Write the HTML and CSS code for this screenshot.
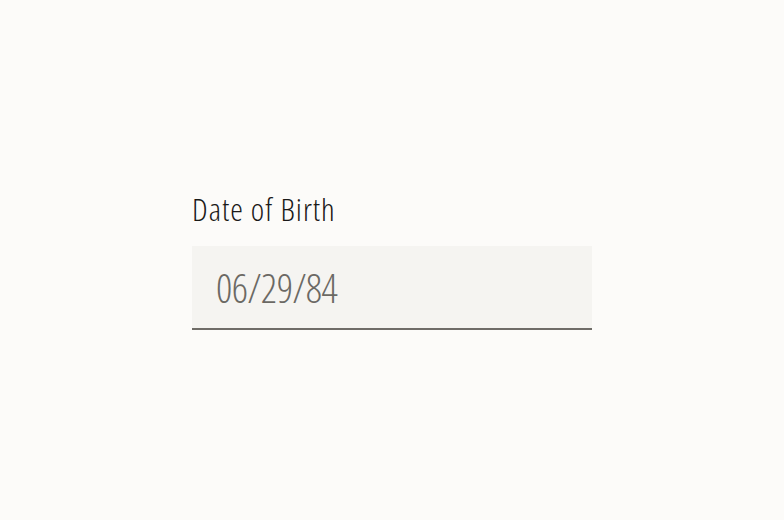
FILE: index.html
```html
<!DOCTYPE html>
<html lang="en">
<head>
    <meta charset="UTF-8">
    <meta name="viewport" content="width=device-width, initial-scale=1.0">
    <title>Date of Birth</title>
    <link rel="stylesheet" href="styles.css">
</head>
<body>

    <main class="page">
        <div class="field">
            <label class="field-label" for="dob">Date of Birth</label>
            <input class="field-input" id="dob" type="text" value="06/29/84">
        </div>
    </main>

</body>
</html>
```
FILE: styles.css
```css
body {
    font-family: "Open Sans", "Roboto Condensed", sans-serif;
    font-stretch: 75%;
    background-color: #fcfbf9;
    margin: 0;
    padding: 0;
}

.page {
    display: flex;
    justify-content: center;
    padding-top: 193px;
}

.field {
    display: flex;
    flex-direction: column;
    width: 400px;
}

.field-label {
    font-size: 32px;
    font-weight: 350;
    line-height: 32px;
    letter-spacing: 1px;
    color: #1a1918;
    margin-bottom: 21px;
}

.field-input {
    box-sizing: border-box;
    width: 400px;
    height: 84px;
    margin: 0;
    padding: 0 24px;
    border: none;
    border-bottom: 2px solid #6f6c67;
    border-radius: 0;
    background-color: #f5f4f1;
    font-family: inherit;
    font-stretch: inherit;
    font-size: 40px;
    font-weight: 300;
    letter-spacing: -0.5px;
    color: #6b6964;
    outline: none;
}
```
